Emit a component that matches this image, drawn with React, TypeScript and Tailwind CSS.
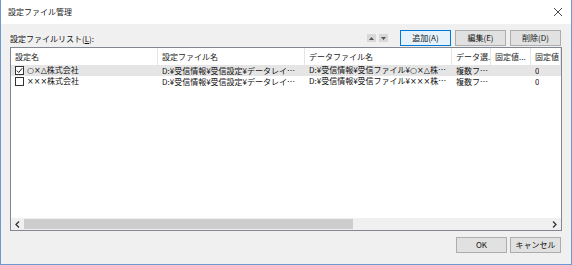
const font = { fontFamily: '"Noto Sans CJK JP", "Noto Sans", sans-serif' };
const sym = { fontFamily: '"DejaVu Sans", sans-serif', fontVariantEmoji: 'text' } as React.CSSProperties;

const columns = [
  { title: '設定名', w: 'w-[147px]' },
  { title: '設定ファイル名', w: 'w-[147px]' },
  { title: 'データファイル名', w: 'w-[147px]' },
  { title: 'データ選...', w: 'w-[39px]' },
  { title: '固定値...', w: 'w-[40px]' },
  { title: '固定値', w: 'w-[30px]' },
];

const rows = [
  {
    checked: true,
    selected: true,
    cells: ['○×△株式会社', 'D:¥受信情報¥受信設定¥データレイアウト設定.xml', 'D:¥受信情報¥受信ファイル¥○×△株式会社.csv', '複数ファイル', '', '0'],
  },
  {
    checked: false,
    selected: false,
    cells: ['×××株式会社', 'D:¥受信情報¥受信設定¥データレイアウト設定.xml', 'D:¥受信情報¥受信ファイル¥×××株式会社.csv', '複数ファイル', '', '0'],
  },
];

function Text({ value }: { value: string }) {
  const parts = value.split(/([○×△]+)/);
  return (
    <>
      {parts.map((p, i) =>
        /^[○×△]+$/.test(p) ? (
          <span key={i} style={sym} className="text-[#111]">{p}</span>
        ) : (
          p
        )
      )}
    </>
  );
}

function Checkbox({ checked }: { checked: boolean }) {
  return (
    <span className="w-[9px] h-[9px] border border-[#333] bg-white flex items-center justify-center shrink-0">
      {checked && (
        <svg width="7" height="7" viewBox="0 0 7 7">
          <path d="M0.8 3.6 L2.7 5.5 L6.2 1.2" fill="none" stroke="#222" strokeWidth="1" />
        </svg>
      )}
    </span>
  );
}

function Button({ label, focused }: { label: string; focused?: boolean }) {
  return (
    <div
      className={`w-[51px] h-[16px] flex items-center justify-center text-[8px] text-[#111] border ${
        focused ? 'border-[#0078d7] bg-[#e5f1fb]' : 'border-[#adadad] bg-[#e1e1e1]'
      }`}
    >
      {label}
    </div>
  );
}

export default function App() {
  return (
    <div className="w-[572px] h-[265px] flex flex-col border border-t-0 border-[#6c9ad0] bg-[#f0f0f0] overflow-hidden" style={font}>
      {/* title bar */}
      <div className="h-[24px] bg-white flex items-center justify-between pl-[7px] pr-[8px] shrink-0">
        <span className="text-[8px] text-[#222] leading-none">設定ファイル管理</span>
        <svg width="10" height="10" viewBox="0 0 10 10">
          <path d="M1 1 L9 9 M9 1 L1 9" stroke="#333" strokeWidth="0.9" />
        </svg>
      </div>

      <div className="flex-1 flex flex-col px-[9px]">
        {/* toolbar */}
        <div className="h-[22px] flex items-end justify-between pb-[1px]">
          <span className="text-[8px] text-[#111] leading-none mb-[2px]">
            設定ファイルリスト(<span className="underline">L</span>):
          </span>
          <div className="flex items-center gap-[4px] mb-[-1px] mr-[1px]">
            <div className="flex gap-[3px] mr-[8px]">
              <div className="w-[9px] h-[8px] bg-[#d8d8d8] flex items-center justify-center">
                <svg width="5" height="3" viewBox="0 0 5 3"><path d="M0 3 L2.5 0 L5 3 Z" fill="#555" /></svg>
              </div>
              <div className="w-[9px] h-[8px] bg-[#d8d8d8] flex items-center justify-center">
                <svg width="5" height="3" viewBox="0 0 5 3"><path d="M0 0 L5 0 L2.5 3 Z" fill="#555" /></svg>
              </div>
            </div>
            <Button label="追加(A)" focused />
            <Button label="編集(E)" />
            <Button label="削除(D)" />
          </div>
        </div>

        {/* list view */}
        <div className="h-[184px] border border-[#828790] bg-white flex flex-col mt-[1px]">
          <div className="flex-1 overflow-hidden">
            <div className="flex h-[17px] items-center">
              {columns.map((c, i) => (
                <div
                  key={i}
                  className={`${c.w} shrink-0 h-full flex items-center pl-[4px] pr-[2px] border-r border-[#e5e5e5] text-[8px] text-[#222] whitespace-nowrap overflow-hidden`}
                >
                  {c.title}
                </div>
              ))}
            </div>
            {rows.map((r, ri) => (
              <div key={ri} className={`flex h-[11px] items-center ${r.selected ? 'bg-[#e5e5e5]' : ''}`}>
                {r.cells.map((cell, ci) => (
                  <div
                    key={ci}
                    className={`${columns[ci].w} shrink-0 flex items-center gap-[3px] pl-[4px] pr-[3px] text-[8px] text-[#111] leading-none whitespace-nowrap overflow-hidden`}
                  >
                    {ci === 0 && <Checkbox checked={r.checked} />}
                    <span className="min-w-0 overflow-hidden text-ellipsis">
                      <Text value={cell} />
                    </span>
                  </div>
                ))}
              </div>
            ))}
          </div>
          {/* horizontal scrollbar */}
          <div className="h-[12px] flex bg-[#f0f0f0] shrink-0">
            <div className="w-[13px] flex items-center justify-center">
              <svg width="5" height="7" viewBox="0 0 5 7"><path d="M4 0.5 L1 3.5 L4 6.5" fill="none" stroke="#333" strokeWidth="1.3" /></svg>
            </div>
            <div className="w-[329px] my-[1px] bg-[#cdcdcd]" />
            <div className="flex-1" />
            <div className="w-[13px] flex items-center justify-center">
              <svg width="5" height="7" viewBox="0 0 5 7"><path d="M1 0.5 L4 3.5 L1 6.5" fill="none" stroke="#333" strokeWidth="1.3" /></svg>
            </div>
          </div>
        </div>

        {/* footer */}
        <div className="flex justify-end gap-[3px] mt-[6px] mr-[1px]">
          <Button label="OK" />
          <Button label="キャンセル" />
        </div>
      </div>
    </div>
  );
}
